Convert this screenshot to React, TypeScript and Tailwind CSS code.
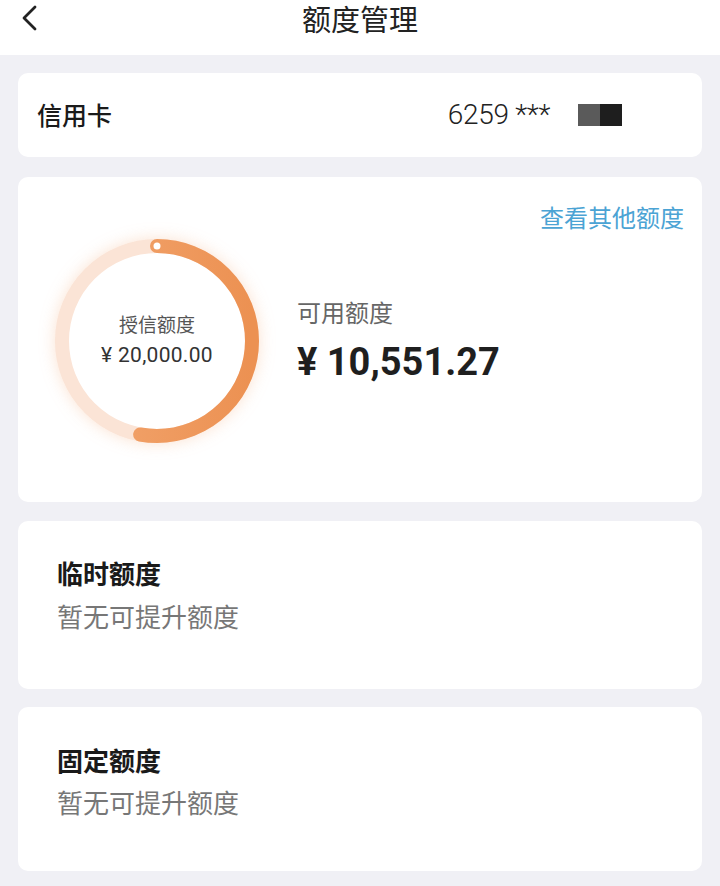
const font = { fontFamily: '"Noto Sans CJK SC", "Noto Sans", sans-serif' };
const numFont = { fontFamily: 'Roboto, "Noto Sans CJK SC", sans-serif' };

// circumference of the ring, r = 95
const CIRC = 2 * Math.PI * 95;

function CreditRing({ total, available }: { total: number; available: number }) {
	const ratio = available / total;
	return (
		<div className="relative w-[220px] h-[220px] shrink-0">
			<svg
				width="220"
				height="220"
				viewBox="0 0 220 220"
				className="drop-shadow-[0_0_8px_rgba(240,150,90,0.28)]"
			>
				<defs>
					<linearGradient id="arc" x1="0" y1="0" x2="0" y2="1">
						<stop offset="0%" stopColor="#f3a771" />
						<stop offset="100%" stopColor="#ec9152" />
					</linearGradient>
				</defs>
				<circle cx="110" cy="110" r="95" fill="#ffffff" stroke="#fbe4d6" strokeWidth="14" />
				<circle
					cx="110"
					cy="110"
					r="95"
					fill="none"
					stroke="url(#arc)"
					strokeWidth="14"
					strokeLinecap="round"
					strokeDasharray={`${CIRC * ratio} ${CIRC}`}
					transform="rotate(-90 110 110)"
				/>
				<circle cx="110" cy="15" r="3.5" fill="#ffffff" />
			</svg>
			<div className="absolute inset-0 flex flex-col items-center justify-center pb-[2px]">
				<div className="text-[19px] leading-[26px] text-[#555]">授信额度</div>
				<div className="text-[21px] leading-[28px] text-[#333] mt-[4px] tracking-[0.3px]" style={numFont}>
					¥ {total.toLocaleString("en-US", { minimumFractionDigits: 2 })}
				</div>
			</div>
		</div>
	);
}

function QuotaCard({ title, pt, mt, h }: { title: string; pt: string; mt: string; h: string }) {
	return (
		<div className={`bg-white rounded-[10px] pl-[39px] ${pt} ${h}`}>
			<div className="text-[26px] leading-[34px] font-bold text-[#1a1a1a]">{title}</div>
			<div className={`text-[26px] leading-[34px] text-[#777] ${mt}`}>暂无可提升额度</div>
		</div>
	);
}

export default function App() {
	return (
		<div className="w-[720px] h-[886px] bg-[#f0f0f5] overflow-hidden" style={font}>
			{/* Header */}
			<div className="relative h-[55px] bg-white flex justify-center pt-[3px]">
				<svg
					className="absolute left-[18px] top-[4px]"
					width="24"
					height="28"
					viewBox="0 0 24 28"
					fill="none"
					stroke="#222"
					strokeWidth="2.8"
					strokeLinecap="round"
					strokeLinejoin="round"
				>
					<polyline points="17,3 6,14 17,25" />
				</svg>
				<div className="text-[29px] leading-[30px] text-[#222]">额度管理</div>
			</div>

			<div className="px-[18px] pt-[18px] flex flex-col">
				{/* Card number */}
				<div className="bg-white rounded-[10px] h-[84px] flex items-center pl-[19px] pr-[80px]">
					<div className="text-[25px] font-medium text-[#1a1a1a]">信用卡</div>
					<div className="ml-auto text-[28px] font-light text-[#222] tracking-[-0.3px]" style={numFont}>
						6259 ***
					</div>
					<div className="ml-[28px] flex">
						<div className="w-[22px] h-[22px] bg-[#5a5a5a]" />
						<div className="w-[22px] h-[22px] bg-[#1e1e1e]" />
					</div>
				</div>

				{/* Available credit */}
				<div className="bg-white rounded-[10px] mt-[20px] pt-[25px] pr-[18px] pb-[51px]">
					<div className="flex justify-end">
						<div className="text-[24px] leading-[30px] text-[#4ba3d4]">查看其他额度</div>
					</div>
					<div className="flex items-center pl-[29px] mt-[-1px]">
						<CreditRing total={20000} available={10551.27} />
						<div className="ml-[30px] flex flex-col">
							<div className="text-[24px] leading-[30px] text-[#666]">可用额度</div>
							<div className="text-[38px] leading-[46px] font-bold text-[#1f1f1f] mt-[12px]" style={numFont}>
								¥ 10,551.27
							</div>
						</div>
					</div>
				</div>

				<div className="mt-[19px]">
					<QuotaCard title="临时额度" pt="pt-[35px]" mt="mt-[9px]" h="h-[168px]" />
				</div>
				<div className="mt-[18px]">
					<QuotaCard title="固定额度" pt="pt-[36px]" mt="mt-[8px]" h="h-[164px]" />
				</div>
			</div>
		</div>
	);
}
